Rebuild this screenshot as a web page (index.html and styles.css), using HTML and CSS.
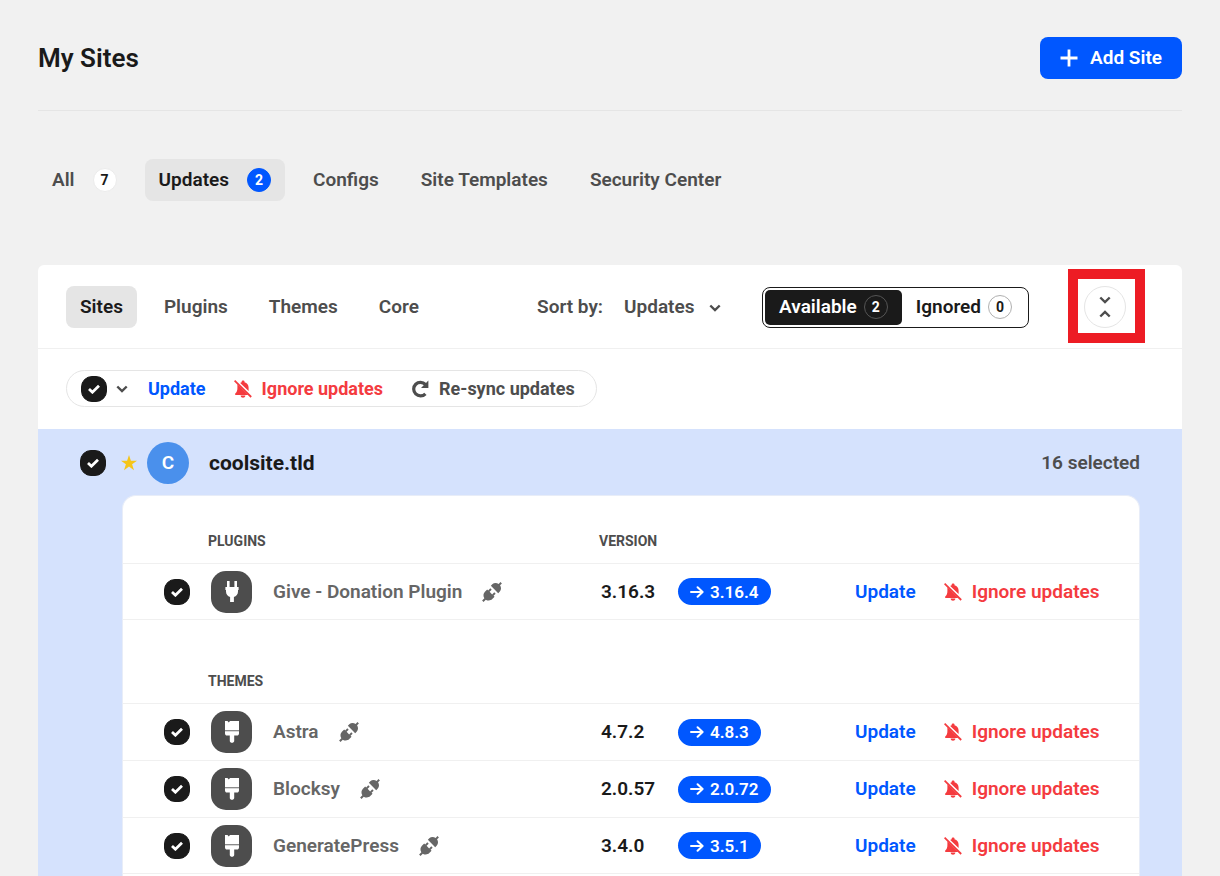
FILE: index.html
```html
<!DOCTYPE html>
<html lang="en">
<head>
  <meta charset="UTF-8" />
  <meta name="viewport" content="width=device-width,initial-scale=1.0" />
  <title>My Sites</title>
  <link rel="stylesheet" href="styles.css">
</head>
<body>
  <svg class="sprite" aria-hidden="true">
    <symbol id="icon-bell-off" viewBox="0 0 18 18">
      <path d="M6.2 2.9 C6.7 2.6 7.2 2.4 7.7 2.3 V1.5 C7.7 .3 10.5 .3 10.5 1.5 V2.3 C13.2 3 14.6 5 14.6 7.8 V11 Z" />
      <path d="M3.4 4.2 L14.2 15 H1.2 V13.4 C2.8 12.2 3.4 10.5 3.4 8 Z" />
      <path d="M6.6 15.4 H11.4 C11.2 18.4 6.8 18.4 6.6 15.4 Z" />
      <path d="M.6 .7 L17.2 17" fill="none" stroke="currentColor" stroke-width="1.8" />
    </symbol>
    <symbol id="icon-plug" viewBox="0 0 16 22">
      <path d="M3 0 H5.6 V6 H10.4 V0 H13 V6 H14.6 V9 H14 V10.5 C14 13.3 12.3 15.4 9.9 16 V21 H6.1 V16 C3.7 15.4 2 13.3 2 10.5 V9 H1.4 V6 H3 Z" />
    </symbol>
    <symbol id="icon-brush" viewBox="0 0 16 22">
      <path d="M1 0 H3.5 L4.8 1.4 L6 0 H15 V9 H1 Z M1 10.3 H15 V12.5 C15 13.8 14.2 14.6 13 14.6 H10.2 V20 C10.2 22.4 5.8 22.4 5.8 20 V14.6 H3 C1.8 14.6 1 13.8 1 12.5 Z" />
      <path d="M1 9 H15 V10.3 H1 Z" opacity=".35" />
    </symbol>
    <symbol id="icon-connect" viewBox="0 0 20 20">
      <g transform="rotate(45 10 10)">
        <path d="M9 -3 H11 V-.4 C13.6 .2 15.2 2 15.2 4.4 V6.4 H4.8 V4.4 C4.8 2 6.4 .2 9 -.4 Z" />
        <path d="M4.8 11.6 H6.2 V8.6 H8.2 V11.6 H11.8 V8.6 H13.8 V11.6 H15.2 V14.8 C15.2 17.2 13.6 19.2 11 19.8 V23 H9 V19.8 C6.4 19.2 4.8 17.2 4.8 14.8 Z" />
      </g>
    </symbol>
    <symbol id="icon-arrow" viewBox="0 0 14 12">
      <path d="M1 6 H12.4 M7.6 1.2 L12.6 6 L7.6 10.8" fill="none" stroke="currentColor" stroke-width="2" stroke-linejoin="round" stroke-linecap="round" />
    </symbol>
    <symbol id="icon-chevron" viewBox="0 0 12 8">
      <path d="M1.3 1.5 L6 6.1 L10.7 1.5" fill="none" stroke="currentColor" stroke-width="2.4" />
    </symbol>
  </svg>

  <header class="page-header">
    <h1>My Sites</h1>
    <button type="button" class="btn-add">
      <svg width="18" height="18" viewBox="0 0 18 18" aria-hidden="true"><path d="M9 .5 V17.5 M.5 9 H17.5" stroke="currentColor" stroke-width="2.8" /></svg>
      Add Site
    </button>
  </header>

  <nav class="tabs main-tabs">
    <a href="#all" class="tab">All <span class="badge">7</span></a>
    <a href="#updates" class="tab active">Updates <span class="badge badge-blue">2</span></a>
    <a href="#configs" class="tab">Configs</a>
    <a href="#templates" class="tab">Site Templates</a>
    <a href="#security" class="tab">Security Center</a>
  </nav>

  <main class="panel">
    <div class="toolbar">
      <nav class="tabs">
        <a href="#sites" class="tab active">Sites</a>
        <a href="#plugins" class="tab">Plugins</a>
        <a href="#themes" class="tab">Themes</a>
        <a href="#core" class="tab">Core</a>
      </nav>
      <div class="sort">
        <label for="sortSelect">Sort by:</label>
        <select id="sortSelect">
          <option>Updates</option>
        </select>
      </div>
      <div class="toggle">
        <button type="button" class="toggle-btn active">Available <span class="badge badge-outline">2</span></button>
        <button type="button" class="toggle-btn">Ignored <span class="badge badge-outline">0</span></button>
      </div>
      <div class="highlight">
        <button type="button" class="btn-collapse" aria-label="Collapse all">
          <svg width="12" height="8"><use href="#icon-chevron" /></svg>
          <svg width="12" height="8" class="flip"><use href="#icon-chevron" /></svg>
        </button>
      </div>
    </div>

    <div class="bulk">
      <div class="bulk-actions">
        <input type="checkbox" class="check" aria-label="Select all sites" checked />
        <button type="button" class="btn-more" aria-label="Selection options"><svg width="12" height="8"><use href="#icon-chevron" /></svg></button>
        <button type="button" class="action action-update">Update</button>
        <button type="button" class="action action-ignore"><svg width="18" height="18"><use href="#icon-bell-off" /></svg>Ignore updates</button>
        <button type="button" class="action action-sync">
          <svg width="18" height="18" viewBox="0 0 18 18" aria-hidden="true">
            <path d="M14.4 4.4 A6.8 6.8 0 1 0 14.4 13.8" fill="none" stroke="currentColor" stroke-width="3.2" />
            <path d="M17.4 .6 V8 H10 Z" />
          </svg>
          Re-sync updates
        </button>
      </div>
    </div>

    <section class="site">
      <div class="site-head">
        <input type="checkbox" class="check" aria-label="Select coolsite.tld" checked />
        <svg class="star" width="16" height="16" viewBox="0 0 16 16" aria-hidden="true"><path d="M8 0 L9.9 5.7 H16 L11.1 9.3 L13 15.2 L8 11.6 L3 15.2 L4.9 9.3 L0 5.7 H6.1 Z" /></svg>
        <span class="avatar">C</span>
        <h2>coolsite.tld</h2>
        <span class="selected">16 selected</span>
      </div>

      <div class="card">
        <table class="updates">
          <thead>
            <tr><th class="col-check"></th><th class="col-name">Plugins</th><th class="col-version">Version</th><th class="col-actions"></th></tr>
          </thead>
          <tbody>
            <tr>
              <td><input type="checkbox" class="check" aria-label="Select Give - Donation Plugin" checked /></td>
              <td><div class="item"><span class="item-icon"><svg width="16" height="22"><use href="#icon-plug" /></svg></span>Give - Donation Plugin<svg class="connect" width="20" height="20"><use href="#icon-connect" /></svg></div></td>
              <td><div class="version"><span>3.16.3</span><span class="pill"><svg width="14" height="12"><use href="#icon-arrow" /></svg>3.16.4</span></div></td>
              <td><div class="row-actions"><button type="button" class="action action-update">Update</button><button type="button" class="action action-ignore"><svg width="18" height="18"><use href="#icon-bell-off" /></svg>Ignore updates</button></div></td>
            </tr>
          </tbody>
        </table>

        <table class="updates">
          <thead>
            <tr><th class="col-check"></th><th class="col-name">Themes</th><th class="col-version"></th><th class="col-actions"></th></tr>
          </thead>
          <tbody>
            <tr>
              <td><input type="checkbox" class="check" aria-label="Select Astra" checked /></td>
              <td><div class="item"><span class="item-icon"><svg width="16" height="22"><use href="#icon-brush" /></svg></span>Astra<svg class="connect" width="20" height="20"><use href="#icon-connect" /></svg></div></td>
              <td><div class="version"><span>4.7.2</span><span class="pill"><svg width="14" height="12"><use href="#icon-arrow" /></svg>4.8.3</span></div></td>
              <td><div class="row-actions"><button type="button" class="action action-update">Update</button><button type="button" class="action action-ignore"><svg width="18" height="18"><use href="#icon-bell-off" /></svg>Ignore updates</button></div></td>
            </tr>
            <tr>
              <td><input type="checkbox" class="check" aria-label="Select Blocksy" checked /></td>
              <td><div class="item"><span class="item-icon"><svg width="16" height="22"><use href="#icon-brush" /></svg></span>Blocksy<svg class="connect" width="20" height="20"><use href="#icon-connect" /></svg></div></td>
              <td><div class="version"><span>2.0.57</span><span class="pill"><svg width="14" height="12"><use href="#icon-arrow" /></svg>2.0.72</span></div></td>
              <td><div class="row-actions"><button type="button" class="action action-update">Update</button><button type="button" class="action action-ignore"><svg width="18" height="18"><use href="#icon-bell-off" /></svg>Ignore updates</button></div></td>
            </tr>
            <tr>
              <td><input type="checkbox" class="check" aria-label="Select GeneratePress" checked /></td>
              <td><div class="item"><span class="item-icon"><svg width="16" height="22"><use href="#icon-brush" /></svg></span>GeneratePress<svg class="connect" width="20" height="20"><use href="#icon-connect" /></svg></div></td>
              <td><div class="version"><span>3.4.0</span><span class="pill"><svg width="14" height="12"><use href="#icon-arrow" /></svg>3.5.1</span></div></td>
              <td><div class="row-actions"><button type="button" class="action action-update">Update</button><button type="button" class="action action-ignore"><svg width="18" height="18"><use href="#icon-bell-off" /></svg>Ignore updates</button></div></td>
            </tr>
          </tbody>
        </table>
      </div>
    </section>
  </main>
</body>
</html>
```
FILE: styles.css
```css
:root {
  --color-blue: #0057ff;
  --color-red: #f43b3f;
  --color-dark: #1a1a1a;
  --color-text: #4d4d4d;
  --color-muted: #666666;
  --color-border: #e5e5e5;
  --color-line: #f0f0f0;
  --color-background: #f1f1f1;
}

* {
  box-sizing: border-box;
}

body {
  margin: 0;
  padding: 0 38px;
  min-height: 100vh;
  display: flex;
  flex-direction: column;
  background: var(--color-background);
  color: var(--color-text);
  font-family: Roboto, sans-serif;
  font-size: 19px;
  font-weight: 600;
  line-height: 24px;
}

button,
select {
  font: inherit;
  color: inherit;
  background: none;
  border: none;
  margin: 0;
  padding: 0;
  cursor: pointer;
}

svg {
  display: block;
  flex: none;
  fill: currentColor;
}

.sprite {
  position: absolute;
  width: 0;
  height: 0;
}

/* header */
.page-header {
  display: flex;
  align-items: center;
  justify-content: space-between;
  padding: 37px 0 31px;
  border-bottom: 1px solid var(--color-border);
}

h1 {
  margin: 0;
  font-size: 26px;
  font-weight: 600;
  color: var(--color-dark);
}

.btn-add {
  display: flex;
  align-items: center;
  gap: 12px;
  height: 42px;
  padding: 0 20px;
  border-radius: 8px;
  background: var(--color-blue);
  color: white;
}

/* tabs */
.tabs {
  display: flex;
  gap: 14px;
}

.main-tabs {
  padding: 48px 0 64px;
}

.tab {
  display: flex;
  align-items: center;
  gap: 18px;
  height: 42px;
  padding: 0 14px;
  border-radius: 8px;
  color: inherit;
  text-decoration: none;
}

.tab.active {
  background: #e5e5e5;
  color: var(--color-dark);
}

.badge {
  display: flex;
  align-items: center;
  justify-content: center;
  width: 24px;
  height: 24px;
  border: 1px solid #ebebeb;
  border-radius: 50%;
  background: white;
  color: var(--color-dark);
  font-size: 14px;
  font-weight: 700;
}

.badge-blue {
  border-color: var(--color-blue);
  background: var(--color-blue);
  color: white;
}

.badge-outline {
  border-color: #b0b0b0;
  background: none;
  color: inherit;
}

/* panel */
.panel {
  flex: 1;
  display: flex;
  flex-direction: column;
  background: white;
  border-radius: 6px 6px 0 0;
}

.toolbar {
  display: flex;
  align-items: center;
  padding: 21px 56px 20px 28px;
  border-bottom: 1px solid var(--color-line);
}

.toolbar .tabs {
  gap: 13px;
}

.sort {
  display: flex;
  align-items: center;
  gap: 21px;
  margin-left: auto;
}

.sort select {
  appearance: none;
  padding-right: 26px;
  background: url("data:image/svg+xml,%3Csvg xmlns='http://www.w3.org/2000/svg' width='12' height='8'%3E%3Cpath d='M1.3 1.5L6 6.1L10.7 1.5' fill='none' stroke='%234d4d4d' stroke-width='2.4'/%3E%3C/svg%3E") no-repeat right 9px;
}

.toggle {
  display: flex;
  height: 41px;
  margin: 0 55px 0 41px;
  padding: 2px;
  border: 1px solid var(--color-dark);
  border-radius: 8px;
  color: var(--color-dark);
}

.toggle-btn {
  display: flex;
  align-items: center;
  gap: 7px;
  padding: 0 14px;
  border-radius: 5px;
}

.toggle-btn.active {
  background: var(--color-dark);
  color: white;
}

.toggle-btn.active .badge {
  border-color: #555555;
}

.highlight {
  position: relative;
}

.highlight::after {
  content: "";
  position: absolute;
  inset: -17px -19px -15px -16px;
  border: 10px solid #ed1c24;
  pointer-events: none;
}

.btn-collapse {
  display: flex;
  flex-direction: column;
  align-items: center;
  justify-content: center;
  gap: 6px;
  width: 42px;
  height: 42px;
  border: 1px solid var(--color-border);
  border-radius: 50%;
}

.flip {
  transform: rotate(180deg);
}

/* bulk actions */
.bulk {
  display: flex;
  padding: 21px 28px 22px;
}

.bulk-actions {
  display: flex;
  align-items: center;
  height: 37px;
  padding: 0 21px 0 14px;
  border: 1px solid var(--color-border);
  border-radius: 19px;
  font-size: 18px;
  font-weight: 700;
}

.check {
  appearance: none;
  display: block;
  flex: none;
  width: 26px;
  height: 26px;
  margin: 0;
  border: 1px solid var(--color-dark);
  border-radius: 11px;
}

.check:checked {
  background: var(--color-dark) url("data:image/svg+xml,%3Csvg xmlns='http://www.w3.org/2000/svg' width='14' height='10'%3E%3Cpath d='M2 5L5.4 8.2L12 1.8' fill='none' stroke='white' stroke-width='2.8'/%3E%3C/svg%3E") no-repeat center;
}

.btn-more {
  margin: 0 20px 0 9px;
}

.action {
  display: flex;
  align-items: center;
  gap: 10px;
}

.action-update {
  margin-right: 28px;
  color: var(--color-blue);
}

.action-ignore {
  color: var(--color-red);
}

.action-sync {
  margin-left: 28px;
}

/* site */
.site {
  flex: 1;
  display: flex;
  flex-direction: column;
  padding: 0 42px 0 84px;
  background: #d5e2fd;
}

.site-head {
  display: flex;
  align-items: center;
  padding: 13px 0 11px;
  margin-left: -42px;
}

.star {
  margin: 0 10px 0 15px;
  color: #f5c518;
}

.avatar {
  display: flex;
  align-items: center;
  justify-content: center;
  width: 42px;
  height: 42px;
  border-radius: 50%;
  background: #4a90ec;
  color: white;
  font-size: 19px;
}

h2 {
  margin: 0 0 0 20px;
  font-size: 21px;
  font-weight: 700;
  color: var(--color-dark);
}

.selected {
  margin-left: auto;
}

.card {
  flex: 1;
  border: 1px solid #e8edf8;
  border-bottom: none;
  border-radius: 14px 14px 0 0;
  background: white;
}

.updates {
  width: 100%;
  table-layout: fixed;
  border-collapse: separate;
  border-spacing: 0;
}

.updates + .updates {
  margin-top: 16px;
}

.updates th {
  height: 67px;
  padding: 23px 0 0;
  font-size: 14px;
  font-weight: 700;
  text-align: left;
  text-transform: uppercase;
}

.updates td {
  height: 57px;
  padding: 0;
  border-top: 1px solid var(--color-line);
}

.updates tr:last-child td {
  border-bottom: 1px solid var(--color-line);
}

.col-check {
  width: 85px;
}

.col-version {
  width: 256px;
}

.col-actions {
  width: 284px;
}

td .check {
  margin-left: 41px;
}

.item {
  display: flex;
  align-items: center;
  margin-left: 3px;
  color: var(--color-muted);
}

.item-icon {
  display: flex;
  align-items: center;
  justify-content: center;
  width: 41px;
  height: 42px;
  margin-right: 21px;
  border-radius: 15px;
  background: #4d4d4d;
  color: white;
}

.connect {
  margin-left: 20px;
}

.version {
  display: flex;
  align-items: center;
  margin-left: 2px;
  color: var(--color-dark);
}

.version > span:first-child {
  width: 77px;
}

.pill {
  display: flex;
  align-items: center;
  gap: 6px;
  height: 27px;
  padding: 0 12px;
  border-radius: 14px;
  background: var(--color-blue);
  color: white;
  font-size: 17px;
}

.row-actions {
  display: flex;
}
```
